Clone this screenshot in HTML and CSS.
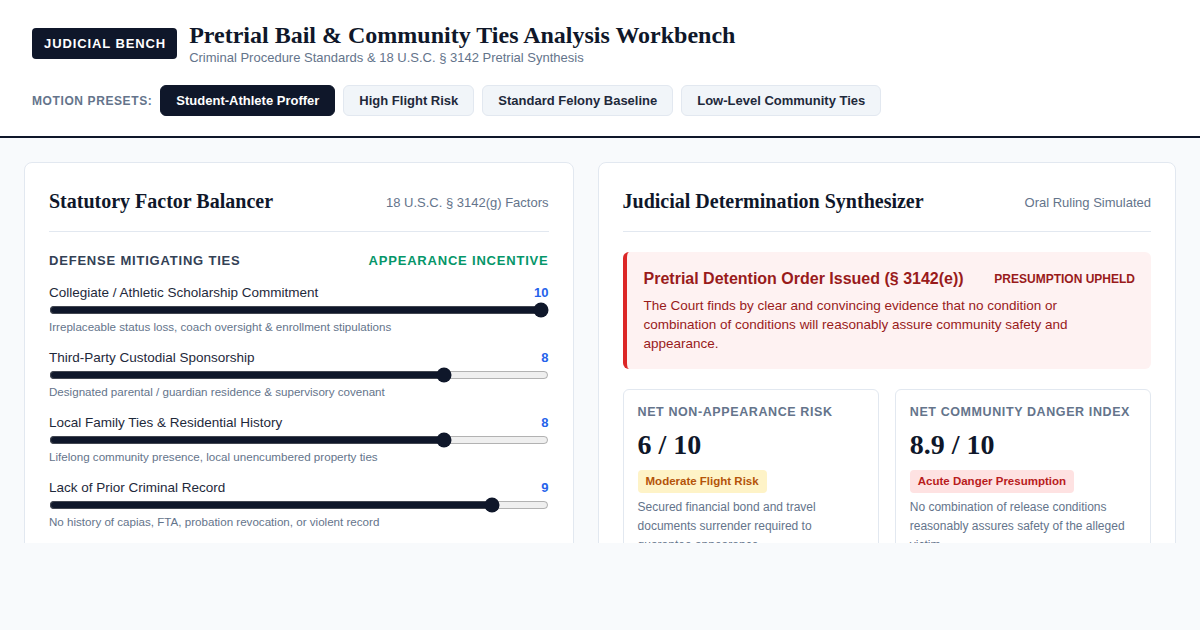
FILE: index.html
```html
<!DOCTYPE html>
<html lang="en">
<head>
  <meta charset="UTF-8" />
  <title>Pretrial Bail &amp; Community Ties Analysis Workbench</title>
  <meta name="viewport" content="width=device-width, initial-scale=1.0" />
  <link rel="stylesheet" href="styles.css">
</head>
<body>

  <header id="bench-header">
    <div class="brand-row">
      <div class="bench-badge">JUDICIAL BENCH</div>
      <div class="brand-text">
        <h1>Pretrial Bail &amp; Community Ties Analysis Workbench</h1>
        <p class="subtitle">Criminal Procedure Standards &amp; 18 U.S.C. § 3142 Pretrial Synthesis</p>
      </div>
    </div>
    <div class="presets">
      <span class="presets-label">MOTION PRESETS:</span>
      <button class="preset active">Student-Athlete Proffer</button>
      <button class="preset">High Flight Risk</button>
      <button class="preset">Standard Felony Baseline</button>
      <button class="preset">Low-Level Community Ties</button>
    </div>
  </header>

  <main id="workspace">
    <div class="panels">

      <section class="card">
        <div class="card-head">
          <h2>Statutory Factor Balancer</h2>
          <span class="card-meta">18 U.S.C. § 3142(g) Factors</span>
        </div>

        <div class="group-head">
          <span>DEFENSE MITIGATING TIES</span>
          <span class="incentive">APPEARANCE INCENTIVE</span>
        </div>

        <div class="factor">
          <div class="factor-top">
            <label>Collegiate / Athletic Scholarship Commitment</label>
            <span class="factor-val">10</span>
          </div>
          <input type="range" min="0" max="10" value="10">
          <p class="hint">Irreplaceable status loss, coach oversight &amp; enrollment stipulations</p>
        </div>

        <div class="factor">
          <div class="factor-top">
            <label>Third-Party Custodial Sponsorship</label>
            <span class="factor-val">8</span>
          </div>
          <input type="range" min="0" max="10" value="8">
          <p class="hint">Designated parental / guardian residence &amp; supervisory covenant</p>
        </div>

        <div class="factor">
          <div class="factor-top">
            <label>Local Family Ties &amp; Residential History</label>
            <span class="factor-val">8</span>
          </div>
          <input type="range" min="0" max="10" value="8">
          <p class="hint">Lifelong community presence, local unencumbered property ties</p>
        </div>

        <div class="factor">
          <div class="factor-top">
            <label>Lack of Prior Criminal Record</label>
            <span class="factor-val">9</span>
          </div>
          <input type="range" min="0" max="10" value="9">
          <p class="hint">No history of capias, FTA, probation revocation, or violent record</p>
        </div>
      </section>

      <section class="card">
        <div class="card-head">
          <h2>Judicial Determination Synthesizer</h2>
          <span class="card-meta">Oral Ruling Simulated</span>
        </div>

        <div class="ruling">
          <div class="ruling-top">
            <h3>Pretrial Detention Order Issued (§ 3142(e))</h3>
            <span class="ruling-tag">PRESUMPTION UPHELD</span>
          </div>
          <p>The Court finds by clear and convincing evidence that no condition or combination of conditions will reasonably assure community safety and appearance.</p>
        </div>

        <div class="metrics">
          <div class="metric">
            <div class="metric-label">NET NON-APPEARANCE RISK</div>
            <div class="metric-value">6 / 10</div>
            <span class="pill pill-amber">Moderate Flight Risk</span>
            <p class="metric-desc">Secured financial bond and travel documents surrender required to guarantee appearance.</p>
          </div>
          <div class="metric">
            <div class="metric-label">NET COMMUNITY DANGER INDEX</div>
            <div class="metric-value">8.9 / 10</div>
            <span class="pill pill-red">Acute Danger Presumption</span>
            <p class="metric-desc">No combination of release conditions reasonably assures safety of the alleged victim.</p>
          </div>
        </div>
      </section>

    </div>
  </main>

</body>
</html>
```

FILE: styles.css
```css
* { box-sizing: border-box; margin: 0; padding: 0; }
body {
  font-family: "Liberation Sans", Arial, sans-serif;
  background: #f8fafc;
  color: #1e293b;
}

#bench-header {
  background: #fff;
  border-bottom: 2px solid #0f172a;
  padding: 21px 32px 20px;
}
.brand-row {
  display: flex;
  align-items: center;
  gap: 12px;
}
.bench-badge {
  background: #0f172a;
  color: #fff;
  font-weight: bold;
  font-size: 13px;
  line-height: 15px;
  letter-spacing: 0.9px;
  padding: 8px 11px 8px 12px;
  border-radius: 4px;
}
h1 {
  font-family: "Liberation Serif", "Times New Roman", serif;
  font-size: 24px;
  line-height: 28px;
  color: #0f172a;
}
.subtitle {
  font-size: 13px;
  line-height: 16px;
  color: #64748b;
  margin-top: 1px;
}
.presets {
  display: flex;
  align-items: center;
  gap: 8px;
  margin-top: 19px;
}
.presets-label {
  font-size: 12px;
  font-weight: bold;
  color: #64748b;
  letter-spacing: 0.6px;
}
.preset {
  font-family: inherit;
  font-size: 13px;
  font-weight: bold;
  color: #1e293b;
  background: #f1f5f9;
  border: 1px solid #e2e8f0;
  border-radius: 6px;
  height: 31px;
  padding: 0 15px;
  cursor: pointer;
}
.preset.active {
  background: #0f172a;
  border-color: #0f172a;
  color: #fff;
}

#workspace {
  padding: 24px 24px 0;
}
.panels {
  display: grid;
  grid-template-columns: 0.95fr 1fr;
  gap: 24px;
  height: 381px;
  overflow: hidden;
  align-items: start;
}
.card {
  background: #fff;
  border: 1px solid #e2e8f0;
  border-radius: 8px;
  padding: 24px 24px 40px;
}
.card-head {
  display: flex;
  justify-content: space-between;
  align-items: center;
  padding-bottom: 16px;
  border-bottom: 1px solid #e2e8f0;
  margin-bottom: 20px;
}
h2 {
  font-family: "Liberation Serif", "Times New Roman", serif;
  font-size: 20px;
  line-height: 28px;
  color: #0f172a;
}
.card-meta {
  font-size: 13px;
  color: #64748b;
  padding-top: 3px;
}

.group-head {
  display: flex;
  justify-content: space-between;
  font-size: 13px;
  font-weight: bold;
  letter-spacing: 0.8px;
  color: #334155;
  line-height: 18px;
  margin-bottom: 14px;
}
.incentive { color: #059669; }

.factor { margin-bottom: 15px; }
.factor-top {
  display: flex;
  justify-content: space-between;
  align-items: center;
  line-height: 18px;
}
.factor-top label {
  font-size: 13.5px;
  color: #1e293b;
}
.factor-val {
  font-size: 13px;
  font-weight: bold;
  color: #2563eb;
}
.factor input[type=range] {
  display: block;
  width: 100%;
  height: 16px;
  margin: 0;
  accent-color: #0f172a;
}
.hint {
  font-size: 11.6px;
  color: #64748b;
  line-height: 15px;
  margin-top: 1px;
}

.ruling {
  background: #fef2f2;
  border-left: 4px solid #dc2626;
  border-radius: 6px;
  padding: 16px 16px 16px 17px;
  color: #991b1b;
}
.ruling-top {
  display: flex;
  justify-content: space-between;
  align-items: center;
  margin-bottom: 6px;
}
h3 {
  font-size: 16px;
  line-height: 22px;
}
.ruling-tag {
  font-size: 12px;
  font-weight: bold;
}
.ruling p {
  font-size: 13.5px;
  line-height: 19px;
  max-width: 460px;
}

.metrics {
  display: grid;
  grid-template-columns: 1fr 1fr;
  gap: 16px;
  margin-top: 20px;
}
.metric {
  border: 1px solid #e2e8f0;
  border-radius: 6px;
  padding: 14px;
}
.metric-label {
  font-size: 12.5px;
  font-weight: bold;
  letter-spacing: 0.6px;
  color: #64748b;
  line-height: 16px;
}
.metric-value {
  font-family: "Liberation Serif", "Times New Roman", serif;
  font-weight: bold;
  font-size: 28px;
  line-height: 32px;
  color: #0f172a;
  margin-top: 9px;
}
.pill {
  display: inline-block;
  font-size: 11.5px;
  line-height: 15px;
  font-weight: bold;
  padding: 4px 8px;
  border-radius: 4px;
  margin-top: 9px;
}
.pill-amber { background: #fef3c7; color: #b45309; }
.pill-red { background: #fee2e2; color: #b91c1c; }
.metric-desc {
  font-size: 12px;
  line-height: 19px;
  color: #64748b;
  margin-top: 5px;
}
```
